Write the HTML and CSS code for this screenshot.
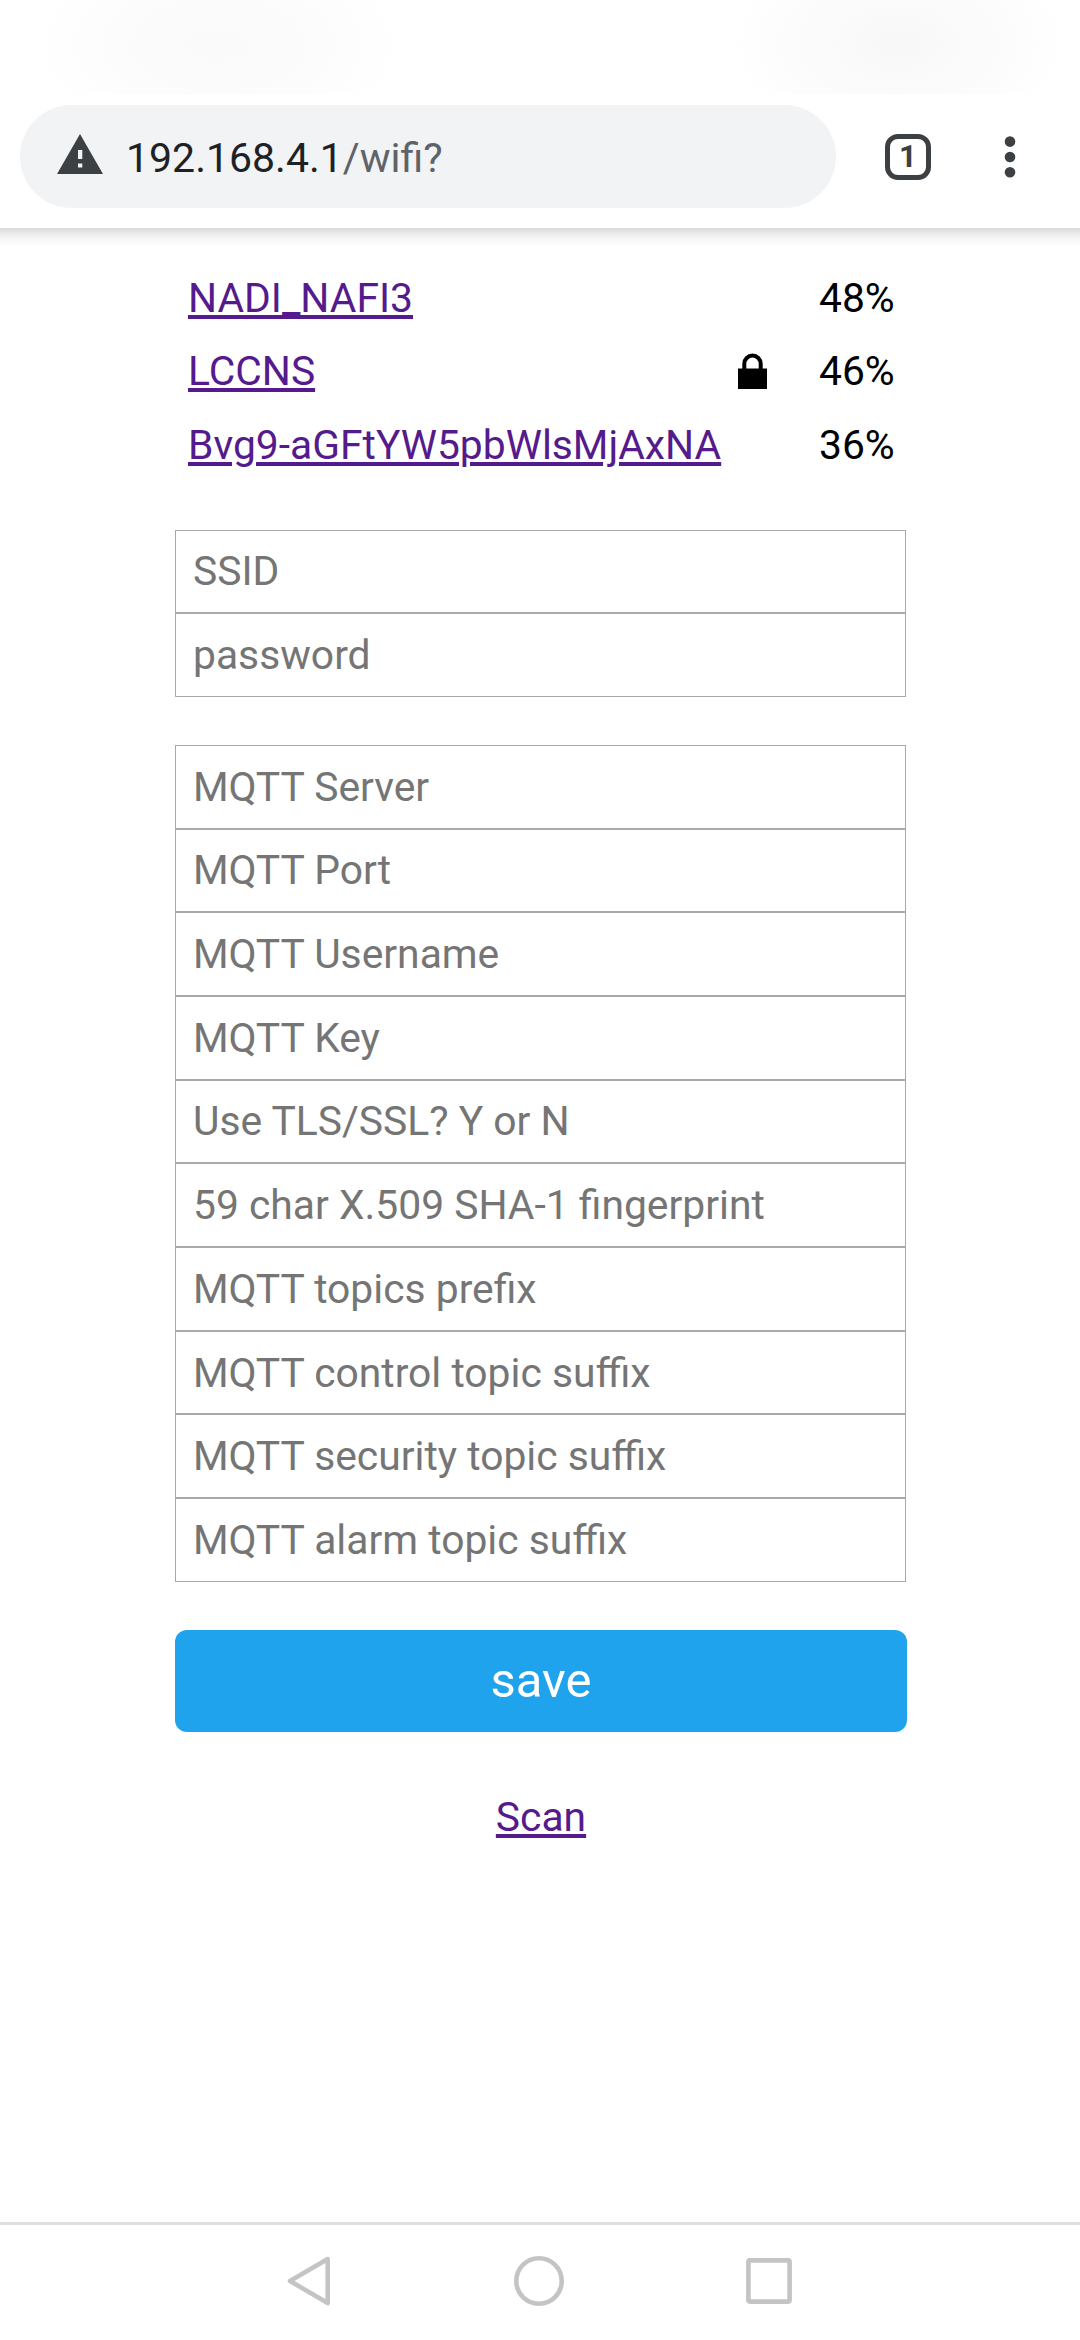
FILE: index.html
```html
<!DOCTYPE html>
<html lang="en">
<head>
<meta charset="utf-8">
<title>WiFi setup</title>
<link rel="stylesheet" href="styles.css">
</head>
<body>
<div class="statusbar"></div>
<header class="toolbar">
  <div class="omnibox">
    <svg class="warning" width="46" height="40" viewBox="0 0 46 40"><path fill="#3c4043" fill-rule="evenodd" d="M23 0L46 40H0zM21 16v9h4.300v-9zM21 29.500v4h4.300v-4z"/></svg>
    <div class="url"><span class="host">192.168.4.1</span><span class="path">/wifi?</span></div>
  </div>
  <div class="tabs">1</div>
  <svg class="more" width="12" height="42" viewBox="0 0 12 42" fill="#3c4043"><circle cx="6" cy="5.600" r="5.300"/><circle cx="6" cy="21" r="5.300"/><circle cx="6" cy="36.300" r="5.300"/></svg>
</header>
<div class="edge"></div>
<main class="page">
  <div class="networks">
    <div class="network"><a href="#">NADI_NAFI3</a><span class="signal">48%</span></div>
    <div class="network"><a href="#">LCCNS</a>
      <svg class="lock" width="29" height="36" viewBox="0 0 29 36"><path d="M0 15.500h29V36H0z"/><path d="M6.300 17V10.800a8.200 8.200 0 0 1 16.400 0V17" fill="none" stroke="#000" stroke-width="4"/></svg>
      <span class="signal">46%</span></div>
    <div class="network"><a href="#">Bvg9-aGFtYW5pbWlsMjAxNA</a><span class="signal">36%</span></div>
  </div>
  <form class="form">
    <div class="group">
      <input placeholder="SSID">
      <input placeholder="password">
    </div>
    <div class="group">
      <input placeholder="MQTT Server">
      <input placeholder="MQTT Port">
      <input placeholder="MQTT Username">
      <input placeholder="MQTT Key">
      <input placeholder="Use TLS/SSL? Y or N">
      <input placeholder="59 char X.509 SHA-1 fingerprint">
      <input placeholder="MQTT topics prefix">
      <input placeholder="MQTT control topic suffix">
      <input placeholder="MQTT security topic suffix">
      <input placeholder="MQTT alarm topic suffix">
    </div>
    <button class="save" type="button">save</button>
  </form>
  <div class="scan"><a href="#">Scan</a></div>
</main>
<nav class="navbar">
  <svg width="44" height="50" viewBox="0 0 44 50"><path d="M40.700 3L3 25L40.700 47z"/></svg>
  <svg width="50" height="50" viewBox="0 0 50 50"><circle cx="25" cy="25" r="22.700"/></svg>
  <svg width="46" height="46" viewBox="0 0 46 46"><rect x="2.400" y="2.400" width="41.200" height="41.200" rx="1.500"/></svg>
</nav>
</body>
</html>
```
FILE: styles.css
```css
* { box-sizing: border-box; }
body {
  margin: 0;
  height: 2340px;
  display: flex;
  flex-direction: column;
  background: #fff;
  font-family: Roboto, "Liberation Sans", sans-serif;
  font-size: 40.8px;
  overflow: hidden;
}
svg { display: block; flex: none; }
.statusbar {
  height: 94px;
  flex: none;
  background:
    radial-gradient(ellipse 190px 105px at 218px 45px, #fafafa 15%, rgba(255, 255, 255, 0) 100%),
    radial-gradient(ellipse 170px 105px at 898px 43px, #f8f8f8 10%, rgba(255, 255, 255, 0) 100%),
    #fff;
}
.toolbar {
  height: 134px;
  flex: none;
  display: flex;
  align-items: center;
  padding: 0 64px 9px 20px;
}
.edge {
  height: 20px;
  flex: none;
  background: linear-gradient(#d9d9d9, #ececec 30%, #f8f8f8 60%, #fff);
}
.omnibox {
  width: 816px;
  height: 103px;
  border-radius: 52px;
  background: #f1f3f4;
  display: flex;
  align-items: center;
  padding-left: 37px;
  gap: 23px;
}
.warning { margin-top: -5px; }
.url { font-size: 41px; color: #202124; line-height: 48px; padding-top: 2px; }
.path { color: #5f6368; }
.tabs {
  width: 46px;
  height: 46px;
  margin-left: 49px;
  border: 5px solid #3c4043;
  border-radius: 13px;
  font-size: 31px;
  font-weight: 700;
  line-height: 36px;
  text-align: center;
  color: #3c4043;
}
.more { margin-left: auto; }
.page {
  flex: 1;
  width: 732px;
  margin-left: 175px;
  padding-top: 13px;
}
.networks { padding: 0 13px; }
.network {
  display: flex;
  align-items: center;
  height: 73.5px;
}
a {
  color: #551a8b;
  text-decoration: underline 4px;
  text-underline-offset: 3px;
}
.lock { margin-left: auto; }
.signal { width: 75px; margin-left: auto; text-align: right; }
.lock + .signal { margin-left: 52px; }
.form { padding-top: 48px; }
.group {
  width: 731px;
  display: flex;
  flex-direction: column;
  margin-bottom: 48px;
}
input {
  width: 100%;
  height: 83.7px;
  margin: 0;
  padding: 0 17px;
  border: 1px solid #a9a9a9;
  border-radius: 0;
  background: #fff;
  font: inherit;
}
input::placeholder { color: #757575; }
.save {
  display: block;
  width: 732px;
  height: 102px;
  padding: 0;
  border: 0;
  border-radius: 12px;
  background: #1fa3ec;
  color: #fff;
  font-family: inherit;
  font-size: 49px;
}
.scan { margin-top: 61px; text-align: center; line-height: 48px; }
.navbar {
  height: 118px;
  flex: none;
  border-top: 3px solid #e0e0e0;
  display: flex;
  align-items: center;
  justify-content: space-between;
  padding: 0 288px 3px 287px;
}
.navbar svg { fill: none; stroke: #c4c4c4; stroke-width: 4.6; stroke-linejoin: round; }
```
